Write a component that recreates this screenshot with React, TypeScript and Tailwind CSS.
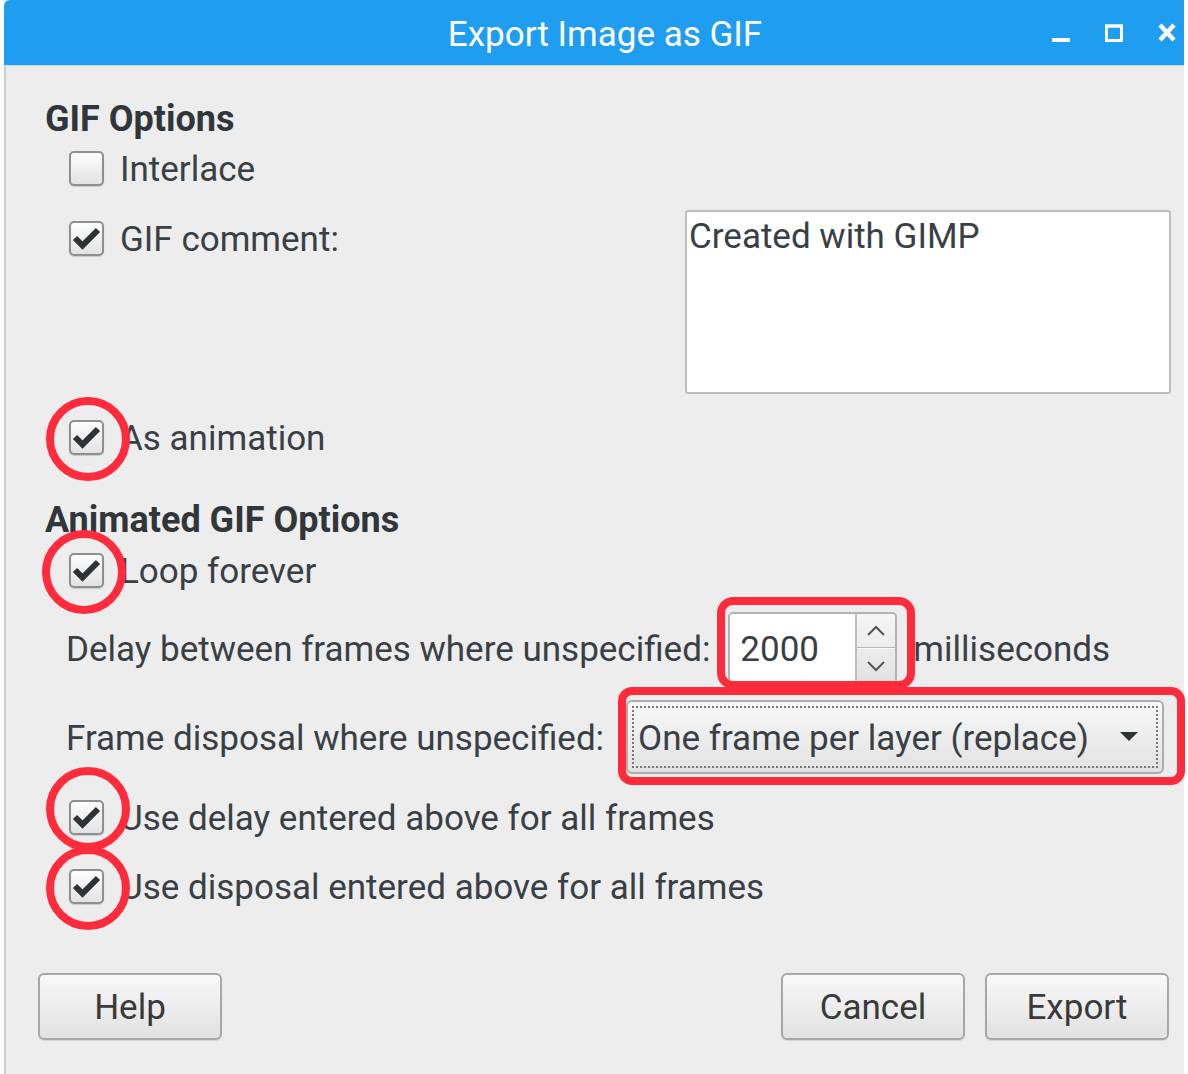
import React from 'react';

const CheckBox = ({ checked }: { checked?: boolean }) => (
  <div className="relative w-[35px] h-[35px] shrink-0 rounded-[5px] border-2 border-[#8f8f8f] bg-linear-to-b from-[#fdfdfd] to-[#e3e3e3] shadow-[0_1px_1px_rgba(0,0,0,0.15)]">
    {checked && (
      <svg viewBox="0 0 35 35" className="absolute -left-[2px] -top-[2px] w-[35px] h-[35px]">
        <path d="M6 17 L13.5 24.5 L29 9" fill="none" stroke="#2e3436" strokeWidth="6" strokeLinejoin="miter" />
      </svg>
    )}
  </div>
);

const CheckRow = ({ label, checked, className = '' }: { label: string; checked?: boolean; className?: string }) => (
  <div className={`flex items-center gap-[16px] h-[40px] ml-[31px] ${className}`}>
    <CheckBox checked={checked} />
    <span className="leading-[40px] pt-[3px]">{label}</span>
  </div>
);

const Button = ({ children }: { children: React.ReactNode }) => (
  <div className="w-[184px] h-[67px] rounded-[6px] border-2 border-[#a7a7a7] bg-linear-to-b from-[#f8f8f8] to-[#e2e2e2] flex items-center justify-center pt-[3px] text-[#3a3a3a] shadow-[0_1px_1px_rgba(0,0,0,0.1)]">
    {children}
  </div>
);

const TitleBar = () => (
  <div className="relative h-[66px] bg-[#1e9df1] rounded-tl-[6px] flex items-center justify-center border-b border-[#bcdcf4]">
    <span className="ml-[22px] mt-[4px] text-white text-[35px] leading-[40px]">Export Image as GIF</span>
    <div className="absolute right-[8px] top-0 h-[66px] flex items-center gap-[35px]">
      <svg width="18" height="20" viewBox="0 0 18 20">
        <rect x="0" y="15" width="18" height="4" fill="#fff" />
      </svg>
      <svg width="18" height="20" viewBox="0 0 18 20">
        <rect x="1.5" y="3" width="15" height="14.5" fill="none" stroke="#fff" strokeWidth="3" />
        <rect x="0" y="1.5" width="18" height="3" fill="#fff" />
      </svg>
      <svg width="18" height="20" viewBox="0 0 18 20">
        <path d="M2 2 L16 17 M16 2 L2 17" stroke="#fff" strokeWidth="4.5" />
      </svg>
    </div>
  </div>
);

export default function App() {
  return (
    <div className="relative w-[1188px] h-[1074px] bg-white font-[Roboto,sans-serif] overflow-hidden">
      <div className="ml-[4px] w-[1180px] h-[1074px] bg-[#ededed] flex flex-col">
        <TitleBar />
        <div className="flex-1 flex flex-col pl-[32px] pr-[13px] border-l-2 border-[#cfcfcf] text-[35px] text-[#394045]">
          <div className="mt-[31px] h-[40px] ml-[7px] pt-[2px] text-[36px] font-bold leading-[40px] text-[#30363a]">GIF Options</div>
          <CheckRow className="mt-[11px]" label="Interlace" />
          <div className="mt-[22px] h-[184px] flex justify-between">
            <CheckRow className="mt-[8px]" label="GIF comment:" checked />
            <div className="w-[486px] h-[184px] bg-white border-2 border-[#bdbdbd] rounded-[3px] px-[2px] leading-[50px]">
              Created with GIMP
            </div>
          </div>
          <CheckRow className="mt-[23px]" label="As animation" checked />
          <div className="mt-[41px] h-[40px] ml-[7px] pt-[2px] text-[36px] font-bold leading-[40px] text-[#30363a]">Animated GIF Options</div>
          <CheckRow className="mt-[12px]" label="Loop forever" checked />
          <div className="mt-[22px] h-[72px] ml-[28px] flex items-center">
            <span className="leading-[40px] pt-[3px]">Delay between frames where unspecified:</span>
            <div className="ml-[18px] w-[169px] h-[72px] flex rounded-[5px] border-2 border-[#b3b3b3] overflow-hidden">
              <div className="flex-1 bg-white flex items-center pl-[10px] pt-[3px] leading-[40px]">2000</div>
              <div className="w-[40px] border-l-2 border-[#bdbdbd] bg-linear-to-b from-[#f6f6f6] to-[#e2e2e2] flex flex-col">
                <div className="flex-1 flex items-center justify-center border-b border-[#b5b5b5]">
                  <svg width="20" height="12" viewBox="0 0 20 12">
                    <path d="M2 10 L10 2 L18 10" fill="none" stroke="#555" strokeWidth="2" />
                  </svg>
                </div>
                <div className="flex-1 flex items-center justify-center border-t border-[#fafafa]">
                  <svg width="20" height="12" viewBox="0 0 20 12">
                    <path d="M2 2 L10 10 L18 2" fill="none" stroke="#555" strokeWidth="2" />
                  </svg>
                </div>
              </div>
            </div>
            <span className="ml-[16px] leading-[40px] pt-[3px]">milliseconds</span>
          </div>
          <div className="mt-[16px] h-[74px] ml-[28px] flex items-center">
            <span className="leading-[40px] pt-[3px]">Frame disposal where unspecified:</span>
            <div className="ml-[22px] w-[538px] h-[74px] rounded-[6px] border-2 border-[#acacac] bg-linear-to-b from-[#f8f8f8] to-[#e2e2e2] p-[4px]">
              <div className="h-full border-2 border-dotted border-[#777] flex items-center justify-between pl-[4px] pr-[18px]">
                <span className="leading-[40px] pt-[3px]">One frame per layer (replace)</span>
                <svg width="18" height="10" viewBox="0 0 18 10">
                  <path d="M0 0 L18 0 L9 9 Z" fill="#2e3436" />
                </svg>
              </div>
            </div>
          </div>
          <CheckRow className="mt-[23px]" label="Use delay entered above for all frames" checked />
          <CheckRow className="mt-[29px]" label="Use disposal entered above for all frames" checked />
          <div className="mt-[67px] h-[67px] flex items-center">
            <Button>Help</Button>
            <div className="ml-auto mr-[2px] flex gap-[20px]">
              <Button>Cancel</Button>
              <Button>Export</Button>
            </div>
          </div>
        </div>
      </div>

      {/* red annotation marks */}
      <div className="absolute left-[46px] top-[397px] w-[84px] h-[84px] rounded-full border-[8px] border-[#fe2b3c]" />
      <div className="absolute left-[42px] top-[530px] w-[84px] h-[84px] rounded-full border-[8px] border-[#fe2b3c]" />
      <div className="absolute left-[46px] top-[767px] w-[84px] h-[84px] rounded-full border-[8px] border-[#fe2b3c]" />
      <div className="absolute left-[46px] top-[846px] w-[84px] h-[84px] rounded-full border-[8px] border-[#fe2b3c]" />
      <div className="absolute left-[717px] top-[597px] w-[198px] h-[92px] rounded-[16px] border-[8px] border-[#fe2b3c]" />
      <div className="absolute left-[618px] top-[687px] w-[567px] h-[98px] rounded-[14px] border-[8px] border-[#fe2b3c]" />
    </div>
  );
}
